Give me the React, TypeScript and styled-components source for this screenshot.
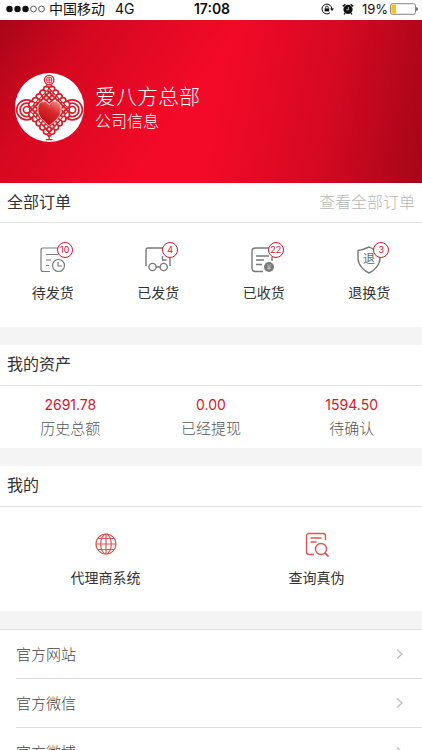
import React from 'react';
import styled, { createGlobalStyle } from 'styled-components';

const RED = '#d0192d';
const GREY = '#7a7a7a';

const GlobalStyle = createGlobalStyle`
  * { box-sizing: border-box; }
  body {
    margin: 0;
    background: #fff;
    color: #333;
    font-family: Inter, 'Noto Sans CJK SC', sans-serif;
    font-size: 16px;
  }
  button, h1, h2, p, ul, dl, dd { margin: 0; padding: 0; font: inherit; }
  ul { list-style: none; }
  a { color: inherit; text-decoration: none; }
  svg { display: block; }
`;

const Screen = styled.div`
  display: flex;
  flex-direction: column;
  height: 100vh;
`;

const StatusBar = styled.header`
  display: grid;
  grid-template-columns: 1fr auto 1fr;
  align-items: center;
  flex: none;
  height: 20px;
  padding: 0 4px 2px 6px;
  color: #111;
  font-size: 14px;
  line-height: 18px;
`;

const StatusGroup = styled.div<{ $end?: boolean }>`
  display: flex;
  align-items: center;
  justify-content: ${(p) => (p.$end ? 'flex-end' : 'flex-start')};
  gap: ${(p) => (p.$end ? 2 : 4)}px;
`;

const Network = styled.span`
  margin-left: 6px;
`;

const Percent = styled.span`
  font-size: 13px;
`;

const StatusIcons = styled.span`
  display: flex;
  gap: 7px;
  margin-right: 6px;
`;

const Clock = styled.time`
  font-weight: 600;
  font-size: 14px;
`;

const Content = styled.main`
  flex: 1;
  min-height: 0;
  overflow-y: auto;
  scrollbar-width: none;
  background: #f4f4f4;
`;

const Hero = styled.section`
  display: flex;
  align-items: center;
  gap: 11px;
  height: 163px;
  padding: 12px 15px 0;
  color: #fff;
  background:
    linear-gradient(125deg, rgba(150, 5, 20, 0.8) 0%, rgba(170, 5, 20, 0.4) 18%, rgba(200, 5, 20, 0) 45%),
    linear-gradient(100deg, rgba(150, 5, 20, 0) 52%, rgba(150, 5, 20, 0.3) 76%, rgba(140, 5, 18, 0.75) 100%),
    #f20a28;
`;

const HeroText = styled.div`
  font-weight: 300;
`;

const HeroName = styled.h1`
  font-size: 21px;
  line-height: 26px;
`;

const HeroInfo = styled.a`
  display: block;
  font-size: 16px;
  line-height: 22px;
`;

const Panel = styled.section`
  margin-bottom: 18px;
  background: #fff;
`;

const PanelHead = styled.div<{ $height: number }>`
  display: flex;
  align-items: center;
  justify-content: space-between;
  height: ${(p) => p.$height}px;
  padding: 0 7px 2px;
  border-bottom: 1px solid #e3e3e3;
`;

const PanelTitle = styled.h2`
  font-size: 16px;
  line-height: 24px;
`;

const MoreLink = styled.a`
  color: #b8b8b8;
  font-weight: 300;
  line-height: 24px;
`;

const Columns = styled.div<{ $count: number; $height: number }>`
  display: grid;
  grid-template-columns: repeat(${(p) => p.$count}, 1fr);
  height: ${(p) => p.$height}px;
`;

const Tile = styled.button<{ $top: number; $gap: number }>`
  display: flex;
  flex-direction: column;
  align-items: center;
  gap: ${(p) => p.$gap}px;
  padding-top: ${(p) => p.$top}px;
  border: 0;
  background: none;
  color: #333;
  cursor: pointer;
`;

const TileLabel = styled.span`
  font-size: 14px;
  line-height: 20px;
`;

const IconBox = styled.span`
  position: relative;
  display: block;
`;

const Badge = styled.span`
  position: absolute;
  top: -4px;
  right: -7px;
  width: 16px;
  height: 16px;
  border: 1px solid ${RED};
  border-radius: 50%;
  background: #fff;
  color: ${RED};
  font-size: 9px;
  line-height: 14px;
  text-align: center;
`;

const Stats = styled.dl`
  display: grid;
  grid-template-columns: repeat(3, 1fr);
  height: 62px;
  padding-top: 7px;
  text-align: center;
`;

const Stat = styled.div`
  display: flex;
  flex-direction: column-reverse;
  justify-content: flex-end;
`;

const StatValue = styled.dd`
  color: ${RED};
  font-size: 14px;
  line-height: 24px;
`;

const StatLabel = styled.dt`
  color: #555;
  font-size: 15px;
  font-weight: 300;
  line-height: 24px;
`;

const Links = styled.ul`
  padding-left: 16px;
  border-top: 1px solid #ddd;
  background: #fff;
`;

const LinkRow = styled.a`
  display: flex;
  align-items: center;
  justify-content: space-between;
  height: 49px;
  padding: 0 19px 1px 0;
  border-bottom: 1px solid #ddd;
  color: #444;
  font-size: 15px;
  font-weight: 300;
`;

const SignalDots = () => (
  <svg width="39" height="8" viewBox="0 0 39 8" role="img" aria-label="信号">
    {[0, 1, 2, 3, 4].map((i) => (
      <circle
        key={i}
        cx={3.5 + i * 8}
        cy="4"
        r={i < 3 ? 3.2 : 2.9}
        fill={i < 3 ? '#111' : 'none'}
        stroke={i < 3 ? 'none' : '#333'}
        strokeWidth="0.8"
      />
    ))}
  </svg>
);

const RotationLock = () => (
  <svg width="14" height="12" viewBox="0 0 14 12" fill="none" stroke="#111">
    <path d="M10.8 6A4.9 4.9 0 1 0 9 9.8" />
    <path d="M9 5.4h4l-2 2.6z" fill="#111" stroke="none" />
    <path d="M3.6 5.4h4.6v3H3.6z" fill="#111" stroke="none" />
    <path d="M4.6 5.5V4.4a1.3 1.3 0 0 1 2.6 0v1.1" strokeWidth="0.9" />
  </svg>
);

const Alarm = () => (
  <svg width="12" height="12" viewBox="0 0 12 12">
    <circle cx="6" cy="6.4" r="4.6" fill="#111" />
    <path d="M.8 3.4 3.4 1.2M11.2 3.4 8.6 1.2M3 10.2 2 11.4M9 10.2l1 1.2" stroke="#111" strokeWidth="1.4" />
    <path d="M6.4 4v2.8H4.4" fill="none" stroke="#fff" strokeWidth="0.7" />
  </svg>
);

const Battery = () => (
  <svg width="28" height="12" viewBox="0 0 28 12" role="img" aria-label="电量">
    <rect x="0.5" y="0.7" width="25" height="10.6" rx="2" fill="#fff" stroke="#777" strokeWidth="0.9" />
    <path d="M1.4 2.4q0-1 1-1H6v9.2H2.4q-1 0-1-1z" fill="#f6c11d" />
    <path d="M26.4 4v4q1.3-.6 1.3-2t-1.3-2z" fill="#222" />
  </svg>
);

const scallops = (x1: number, y1: number, x2: number, y2: number, n: number) =>
  Array.from({ length: n }, (_, i) => {
    const t = i / (n - 1);
    return <circle key={`${x1}-${y1}-${x2}-${i}`} cx={x1 + (x2 - x1) * t} cy={y1 + (y2 - y1) * t} r="9" />;
  });

const KnotLogo = () => (
  <svg width="69" height="69" viewBox="0 0 206 206" role="img" aria-label="爱八方">
    <defs>
      <pattern id="weave" width="12" height="12" patternUnits="userSpaceOnUse" patternTransform="translate(102 108) rotate(45)">
        <rect width="12" height="12" fill="#d5202a" />
        <rect x="3" y="3" width="6.5" height="6.5" rx="2" fill="#fff" />
      </pattern>
      <linearGradient id="heart" x1="0.8" y1="0" x2="0.3" y2="1">
        <stop offset="0" stopColor="#ef8a80" />
        <stop offset="0.4" stopColor="#d92a2c" />
        <stop offset="1" stopColor="#bb0713" />
      </linearGradient>
    </defs>
    <circle cx="103" cy="103" r="103" fill="#fff" />
    <g fill="#fff" stroke="#d5202a" strokeWidth="5">
      {[35, 171].map((x) => (
        <g key={x}>
          <circle cx={x} cy="110" r="30" />
          <circle cx={x} cy="110" r="20" />
          <circle cx={x} cy="110" r="10" />
        </g>
      ))}
      {scallops(94, 49, 50, 94, 5)}
      {scallops(110, 49, 154, 94, 5)}
      {scallops(50, 124, 94, 174, 5)}
      {scallops(154, 124, 110, 174, 5)}
      <path d="M102 46 162 109 102 180 42 109Z" fill="url(#weave)" stroke="#d5202a" strokeWidth="3" />
      <circle cx="102" cy="21" r="14" strokeWidth="4" />
      <path d="M92 21h20M102 11v20M95 14h14v14H95z" fill="none" strokeWidth="2.5" />
      <path d="M95 35v8M109 35v8M102 184v14M92 199h20M96 185l6 6 6-6" fill="none" strokeWidth="4" />
    </g>
    <path
      d="M102 158C88 145 68 133 68 108c0-26 25-31 34-13 9-18 36-13 36 13 0 25-22 37-36 50z"
      fill="url(#heart)"
      stroke="#fff"
      strokeWidth="2"
    />
  </svg>
);

const lineIcon = { width: 26, height: 28, viewBox: '0 0 26 28', fill: 'none', stroke: GREY, strokeWidth: 1.2 };

const PendingIcon = () => (
  <svg {...lineIcon}>
    <path d="M10 25.5H3Q1 25.5 1 23.5V4Q1 2 3 2H21M6 8.5h12M6 14h5M6 19.5h3" />
    <circle cx="18.5" cy="19.5" r="6" />
    <path d="M18 16v4h4" />
  </svg>
);

const ShippedIcon = () => (
  <svg {...lineIcon} strokeWidth={1.4}>
    <path d="M1 20V4Q1 2 3 2H21M25 12v8M17.5 10v4h4M11 21h4" />
    <circle cx="7.5" cy="21" r="3.6" />
    <circle cx="18.7" cy="21" r="3.6" />
  </svg>
);

const ReceivedIcon = () => (
  <svg {...lineIcon} strokeWidth={1.4}>
    <path d="M12 25.5H4.5Q1 25.5 1 22V5.5Q1 2 4.5 2H21M5 10h13M5 14h8M5 18.5h6M21 11v4" />
    <circle cx="18" cy="21" r="5" fill={GREY} stroke="none" />
    <path d="m16 18 2 2.5 2-2.5M18 20.5V24M16 21h4M16 22.5h4" stroke="#ccc" strokeWidth="0.7" />
  </svg>
);

const ReturnChar = styled.text`
  font-size: 12px;
  font-weight: 400;
`;

const ReturnIcon = () => (
  <svg {...lineIcon} strokeWidth={1.4}>
    <path d="M13 1Q7 4 2 4.500V12c0 7 6 13 11 15 5-2 11-8 11-15V4.500Q18 4 13 1z" />
    <ReturnChar x="13" y="17" textAnchor="middle" fill="#666" stroke="none">退</ReturnChar>
  </svg>
);

const GlobeIcon = () => (
  <svg width="22" height="22" viewBox="0 0 22 22" fill="none" stroke="#e05555" strokeWidth="1.2">
    <circle cx="11" cy="11" r="10" />
    <ellipse cx="11" cy="11" rx="5.3" ry="10" />
    <path d="M11 1v20M1 11h20M2.8 5.5h16.4M2.8 16.5h16.4" />
  </svg>
);

const VerifyIcon = () => (
  <svg width="24" height="25" viewBox="0 0 24 25" fill="none" stroke="#e05555" strokeWidth="1.4">
    <path d="M9 22.500H4.500Q1.500 22.500 1.500 20V4Q1.500 1.500 4 1.500H18Q20.500 1.500 20.500 4V8M5.500 6h11M5.500 10h6" />
    <circle cx="16" cy="17" r="5.5" />
    <path d="m20 21 3.500 3.500" strokeWidth="1.8" />
  </svg>
);

const Chevron = () => (
  <svg width="7" height="10" viewBox="0 0 7 10" fill="none" stroke="#bbb" strokeWidth="1.2">
    <path d="m1 .5 5 4.500-5 4.500" />
  </svg>
);

const orders = [
  { label: '待发货', count: 10, Icon: PendingIcon },
  { label: '已发货', count: 4, Icon: ShippedIcon },
  { label: '已收货', count: 22, Icon: ReceivedIcon },
  { label: '退换货', count: 3, Icon: ReturnIcon },
];

const assets = [
  { label: '历史总额', value: '2691.78' },
  { label: '已经提现', value: '0.00' },
  { label: '待确认', value: '1594.50' },
];

const tools = [
  { label: '代理商系统', Icon: GlobeIcon },
  { label: '查询真伪', Icon: VerifyIcon },
];

const ToolIcon = styled.span`
  display: flex;
  align-items: center;
  height: 26px;
`;

export default function App() {
  return (
    <Screen lang="zh-CN">
      <GlobalStyle />
      <StatusBar>
        <StatusGroup>
          <SignalDots />
          <span>中国移动</span>
          <Network>4G</Network>
        </StatusGroup>
        <Clock>17:08</Clock>
        <StatusGroup $end>
          <StatusIcons>
            <RotationLock />
            <Alarm />
          </StatusIcons>
          <Percent>19%</Percent>
          <Battery />
        </StatusGroup>
      </StatusBar>
      <Content>
        <Hero>
          <KnotLogo />
          <HeroText>
            <HeroName>爱八方总部</HeroName>
            <HeroInfo href="#company">公司信息</HeroInfo>
          </HeroText>
        </Hero>
        <Panel>
          <PanelHead $height={40}>
            <PanelTitle>全部订单</PanelTitle>
            <MoreLink href="#orders">查看全部订单</MoreLink>
          </PanelHead>
          <Columns $count={4} $height={104}>
            {orders.map(({ label, count, Icon }) => (
              <Tile key={label} type="button" $top={23} $gap={9}>
                <IconBox>
                  <Icon />
                  <Badge>{count}</Badge>
                </IconBox>
                <TileLabel>{label}</TileLabel>
              </Tile>
            ))}
          </Columns>
        </Panel>
        <Panel>
          <PanelHead $height={41}>
            <PanelTitle>我的资产</PanelTitle>
          </PanelHead>
          <Stats>
            {assets.map(({ label, value }) => (
              <Stat key={label}>
                <StatLabel>{label}</StatLabel>
                <StatValue>{value}</StatValue>
              </Stat>
            ))}
          </Stats>
        </Panel>
        <Panel>
          <PanelHead $height={41}>
            <PanelTitle>我的</PanelTitle>
          </PanelHead>
          <Columns $count={2} $height={104}>
            {tools.map(({ label, Icon }) => (
              <Tile key={label} type="button" $top={24} $gap={11}>
                <ToolIcon>
                  <Icon />
                </ToolIcon>
                <TileLabel>{label}</TileLabel>
              </Tile>
            ))}
          </Columns>
        </Panel>
        <Links>
          {['官方网站', '官方微信', '官方微博'].map((label) => (
            <li key={label}>
              <LinkRow href="#official">
                {label}
                <Chevron />
              </LinkRow>
            </li>
          ))}
        </Links>
      </Content>
    </Screen>
  );
}
